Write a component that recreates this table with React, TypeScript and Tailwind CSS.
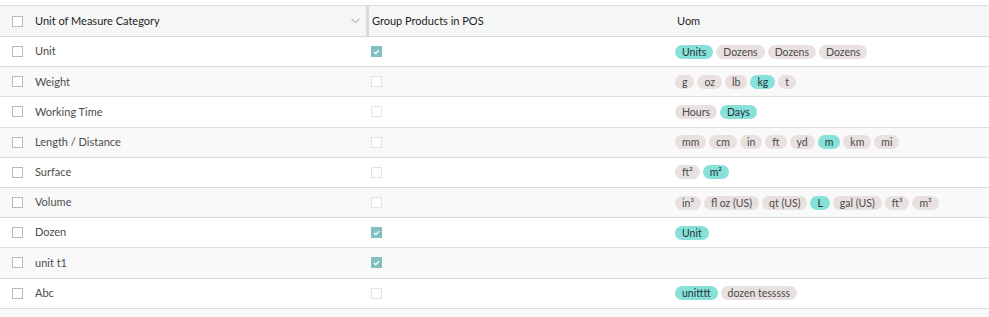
import { useState } from "react";

type Tag = { label: string; active?: boolean };
type Row = { name: string; grouped: boolean; uoms: Tag[] };

const rows: Row[] = [
  {
    name: "Unit",
    grouped: true,
    uoms: [{ label: "Units", active: true }, { label: "Dozens" }, { label: "Dozens" }, { label: "Dozens" }],
  },
  {
    name: "Weight",
    grouped: false,
    uoms: [{ label: "g" }, { label: "oz" }, { label: "lb" }, { label: "kg", active: true }, { label: "t" }],
  },
  {
    name: "Working Time",
    grouped: false,
    uoms: [{ label: "Hours" }, { label: "Days", active: true }],
  },
  {
    name: "Length / Distance",
    grouped: false,
    uoms: [
      { label: "mm" },
      { label: "cm" },
      { label: "in" },
      { label: "ft" },
      { label: "yd" },
      { label: "m", active: true },
      { label: "km" },
      { label: "mi" },
    ],
  },
  {
    name: "Surface",
    grouped: false,
    uoms: [{ label: "ft²" }, { label: "m²", active: true }],
  },
  {
    name: "Volume",
    grouped: false,
    uoms: [
      { label: "in³" },
      { label: "fl oz (US)" },
      { label: "qt (US)" },
      { label: "L", active: true },
      { label: "gal (US)" },
      { label: "ft³" },
      { label: "m³" },
    ],
  },
  { name: "Dozen", grouped: true, uoms: [{ label: "Unit", active: true }] },
  { name: "unit t1", grouped: true, uoms: [] },
  {
    name: "Abc",
    grouped: false,
    uoms: [{ label: "unitttt", active: true }, { label: "dozen tesssss" }],
  },
];

const Box = () => (
  <span className="block w-[11px] h-[11px] border border-[#b9b9b9] bg-white" />
);

const PosCheck = ({ on }: { on: boolean }) =>
  on ? (
    <span className="flex items-center justify-center w-[11px] h-[11px] bg-[#80c0c0]">
      <svg width="7" height="6" viewBox="0 0 7 6">
        <path d="M1 3 L2.8 4.6 L6 1.2" stroke="white" strokeWidth="1.3" fill="none" />
      </svg>
    </span>
  ) : (
    <span className="block w-[11px] h-[11px] border border-[#e3e3e3] bg-white" />
  );

const Pill = ({ tag }: { tag: Tag }) => (
  <span
    className={
      tag.active
        ? "h-[14px] px-[7px] rounded-full bg-[#87e1d9] text-[#263238] text-[10.5px] leading-[14px]"
        : "h-[14px] px-[7px] rounded-full bg-[#e9e0e0] text-[#4a4a4a] text-[10.5px] leading-[14px]"
    }
  >
    {tag.label}
  </span>
);

export default function App() {
  const [hover] = useState<number | null>(null);

  return (
    <div
      className="w-[989px] h-[317px] bg-[#f7f8f8] overflow-hidden text-[11px]"
      style={{ fontFamily: 'Lato, "Noto Sans", sans-serif' }}
    >
      <div className="h-[5px] bg-white" />
      <div className="bg-white border-t border-[#dcdcdc]">
        {/* header */}
        <div className="flex h-[31px] bg-[#f5f7f7] border-b border-[#d7d9dc] text-[#1f2326]">
          <div className="w-[35px] flex items-center pl-[12px]">
            <Box />
          </div>
          <div className="w-[331px] flex items-center justify-between pr-[6px]">
            <span>Unit of Measure Category</span>
            <svg width="9" height="6" viewBox="0 0 9 6">
              <path d="M0.5 0.8 L4.5 4.8 L8.5 0.8" stroke="#8a8a8a" strokeWidth="0.9" fill="none" />
            </svg>
          </div>
          <div className="w-[3px] bg-[#d9d9d9]" />
          <div className="w-[306px] flex items-center pl-[3px]">Group Products in POS</div>
          <div className="flex-1 flex items-center pl-[2px]">Uom</div>
        </div>

        {rows.map((r, i) => (
          <div
            key={i}
            className={
              (i % 2 === 1 ? "bg-[#f9f9f9] " : "bg-white ") +
              "flex h-[30.2px] border-b border-[#dcdcdc] text-[#4c4c4c]" +
              (hover === i ? " bg-gray-100" : "")
            }
          >
            <div className="w-[35px] flex items-center pl-[12px]">
              <Box />
            </div>
            <div className="w-[336px] flex items-center">{r.name}</div>
            <div className="w-[304px] flex items-center">
              <PosCheck on={r.grouped} />
            </div>
            <div className="flex-1 flex items-center gap-[3px]">
              {r.uoms.map((t, j) => (
                <Pill key={j} tag={t} />
              ))}
            </div>
          </div>
        ))}
      </div>
    </div>
  );
}
